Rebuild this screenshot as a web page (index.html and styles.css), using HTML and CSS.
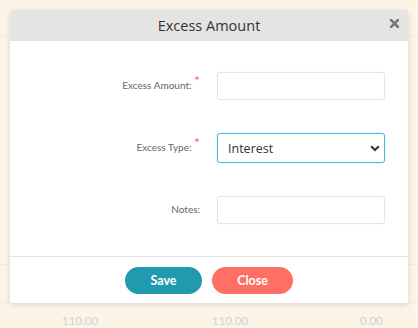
FILE: index.html
```html
<!DOCTYPE html>
<html>
    <head>
        <link rel="stylesheet" href="styles.css">
    </head>
    <body>
        <div class="modal">
            <div class="modal-header">
                <h4>Excess Amount</h4>
                <svg class="close-x" width="9" height="9" viewBox="0 0 9 9">
                    <path d="M1 1 L8 8 M8 1 L1 8" stroke="#767676" stroke-width="2.6" stroke-linecap="square"/>
                </svg>
            </div>
            <div class="modal-body">
                <label>Excess Amount: <span class="req">*</span></label>
                <input type="text" class="field">

                <label>Excess Type: <span class="req">*</span></label>
                <div class="select-wrap">
                    <select class="field select">
                        <option>Interest</option>
                    </select>
                    <svg class="chev" width="10" height="7" viewBox="0 0 10 7">
                        <path d="M1.2 1.2 L5 5 L8.8 1.2" fill="none" stroke="#333" stroke-width="2"/>
                    </svg>
                </div>

                <label>Notes:</label>
                <input type="text" class="field">
            </div>
            <div class="modal-footer">
                <button class="btn btn-save">Save</button>
                <button class="btn btn-close">Close</button>
            </div>
        </div>
        <div class="totals">
            <span>110.00</span>
            <span>110.00</span>
            <span>0.00</span>
        </div>
    </body>
</html>
```

FILE: styles.css
```css
*{
    margin: 0;
    padding: 0;
    box-sizing: border-box;
}
body{
    background-color: #fcf4e6;
    background-image:
        linear-gradient(#efeae2, #efeae2),
        linear-gradient(#efeae2, #efeae2),
        linear-gradient(#efeae2, #efeae2);
    background-repeat: no-repeat;
    background-size: 100% 1px;
    background-position: 0 35px, 0 264px, 0 302px;
    font-family: Lato, sans-serif;
    width: 418px;
    height: 328px;
    overflow: hidden;
    padding-top: 10px;
}
.modal{
    margin: 0 10px;
    width: 398px;
    height: 293px;
    background: #fff;
    border-radius: 2px;
    box-shadow: 0 2px 6px rgba(0,0,0,0.12);
    display: flex;
    flex-direction: column;
}
.modal-header{
    height: 31px;
    background: #e4e4e4;
    border-radius: 2px 2px 0 0;
    position: relative;
    display: flex;
    align-items: center;
    justify-content: center;
}
.modal-header h4{
    font-family: "Open Sans", sans-serif;
    font-weight: 400;
    font-size: 14.5px;
    color: #333;
}
.close-x{
    position: absolute;
    right: 9px;
    top: 9px;
}
.modal-body{
    display: grid;
    grid-template-columns: 190px 168px;
    column-gap: 17px;
    row-gap: 33px;
    align-items: center;
    padding: 31px 0 32px;
}
.modal-body label{
    text-align: right;
    font-size: 10px;
    line-height: 12px;
    padding-bottom: 3px;
    color: #666;
}
.req{
    color: #f46a6a;
    font-size: 14px;
    line-height: 0;
    position: relative;
    top: -3px;
}
.field{
    display: block;
    width: 168px;
    height: 28px;
    border: 1px solid #e6e6e6;
    border-radius: 3px;
    box-shadow: 0 0 2px rgba(0,0,0,0.06);
    background: #fff;
    outline: none;
}
.select-wrap{
    position: relative;
}
.select{
    appearance: none;
    -webkit-appearance: none;
    height: 30px;
    border-color: #4fb6de;
    box-shadow: 0 0 2px rgba(79,182,222,0.4);
    padding-left: 10px;
    font-family: "Open Sans", sans-serif;
    font-size: 12.5px;
    color: #333;
}
.chev{
    position: absolute;
    right: 5px;
    top: 12px;
    pointer-events: none;
}
.modal-footer{
    border-top: 1px solid #e5e5e5;
    display: flex;
    justify-content: center;
    gap: 10px;
    padding-top: 10px;
}
.btn{
    height: 27px;
    border: none;
    border-radius: 14px;
    color: #fff;
    font-family: Lato, sans-serif;
    font-weight: 700;
    font-size: 12.5px;
}
.btn-save{
    width: 77px;
    background: #1f9aaf;
}
.btn-close{
    width: 81px;
    background: #ff6f66;
}
.totals{
    display: flex;
    margin-top: 11px;
    padding-left: 62px;
    font-size: 11.5px;
    color: #d6d1c9;
}
.totals span:nth-child(1){
    width: 150px;
}
.totals span:nth-child(2){
    width: 148px;
}
```
